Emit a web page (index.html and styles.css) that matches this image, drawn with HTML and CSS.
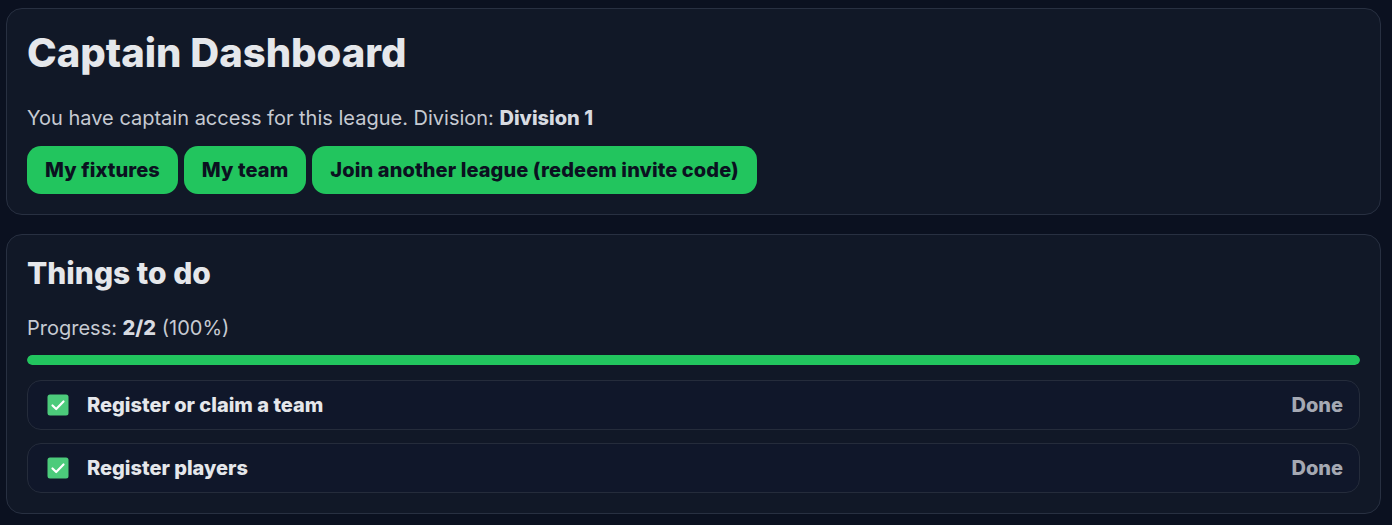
FILE: index.html
```html
<!DOCTYPE html>
<html lang="en">
<head>
<meta charset="utf-8">
<title>Captain Dashboard</title>
<link rel="stylesheet" href="styles.css">
</head>
<body>
<main class="page">
  <section class="card">
    <h1 class="title">Captain Dashboard</h1>
    <p class="lead">You have captain access for this league. Division: <strong>Division 1</strong></p>
    <div class="actions">
      <a class="btn" href="#">My fixtures</a>
      <a class="btn" href="#">My team</a>
      <a class="btn" href="#">Join another league (redeem invite code)</a>
    </div>
  </section>
  <section class="card">
    <h2 class="subtitle">Things to do</h2>
    <p class="progress-label">Progress: <strong>2/2</strong> (100%)</p>
    <div class="bar"><div class="bar-fill" style="width:100%"></div></div>
    <ul class="tasks">
      <li class="task">
        <span class="check"><svg viewBox="0 0 22 22" width="22" height="22"><rect x="0.5" y="0.5" width="21" height="21" rx="2.5" fill="#4ccb7b"/><path d="M5.5 11.5 L9.2 15 L16.5 7.5" fill="none" stroke="#ffffff" stroke-width="2.2" stroke-linecap="round" stroke-linejoin="round"/></svg></span>
        <span class="task-name">Register or claim a team</span>
        <span class="task-status">Done</span>
      </li>
      <li class="task">
        <span class="check"><svg viewBox="0 0 22 22" width="22" height="22"><rect x="0.5" y="0.5" width="21" height="21" rx="2.5" fill="#4ccb7b"/><path d="M5.5 11.5 L9.2 15 L16.5 7.5" fill="none" stroke="#ffffff" stroke-width="2.2" stroke-linecap="round" stroke-linejoin="round"/></svg></span>
        <span class="task-name">Register players</span>
        <span class="task-status">Done</span>
      </li>
    </ul>
  </section>
</main>
</body>
</html>
```
FILE: styles.css
```css
* { box-sizing: border-box; }
html, body {
  margin: 0;
  padding: 0;
  background: #0b1120;
}
body {
  font-family: Inter, "Noto Sans", "Liberation Sans", sans-serif;
  color: #e5e7eb;
}
.page {
  padding: 8px 11px 10px 6px;
  display: flex;
  flex-direction: column;
  gap: 19px;
}
.card {
  background: #111827;
  border: 1px solid #283041;
  border-radius: 16px;
  padding: 20px;
}
.title {
  margin: 0;
  font-size: 40px;
  line-height: 48px;
  font-weight: 800;
  color: #e5e7eb;
}
.lead {
  margin: 27px 0 0 0;
  font-size: 20px;
  line-height: 28px;
  color: #c6cad2;
}
.lead strong { color: #d8dbe1; font-weight: 800; }
.actions {
  display: flex;
  gap: 6px;
  margin-top: 14px;
}
.btn {
  display: inline-flex;
  align-items: center;
  height: 48px;
  padding: 0 18px;
  background: #22c55e;
  color: #0b1120;
  font-weight: 800;
  font-size: 20px;
  letter-spacing: 0.1px;
  text-decoration: none;
  border-radius: 14px;
}
.subtitle {
  margin: 0;
  font-size: 30px;
  line-height: 36px;
  font-weight: 800;
  color: #e5e7eb;
}
.progress-label {
  margin: 23px 0 0 0;
  font-size: 20px;
  line-height: 28px;
  color: #c6cad2;
}
.progress-label strong { font-weight: 800; color: #d8dbe1; }
.bar {
  margin-top: 13px;
  height: 10px;
  border-radius: 999px;
  background: #1f2937;
  overflow: hidden;
}
.bar-fill {
  height: 100%;
  background: #22c55e;
  border-radius: 999px;
}
.tasks {
  list-style: none;
  margin: 15px 0 0 0;
  padding: 0;
  display: flex;
  flex-direction: column;
  gap: 13px;
}
.task {
  display: flex;
  align-items: center;
  height: 50px;
  padding: 0 16px 0 19px;
  border: 1px solid #252c3b;
  border-radius: 14px;
  background: #10172a;
}
.check {
  display: inline-flex;
  width: 22px;
  height: 22px;
  margin-right: 18px;
}
.task-name {
  flex: 1;
  font-size: 20px;
  font-weight: 800;
  color: #e5e7eb;
}
.task-status {
  font-size: 20px;
  font-weight: 800;
  color: #a5a9b3;
}
```
